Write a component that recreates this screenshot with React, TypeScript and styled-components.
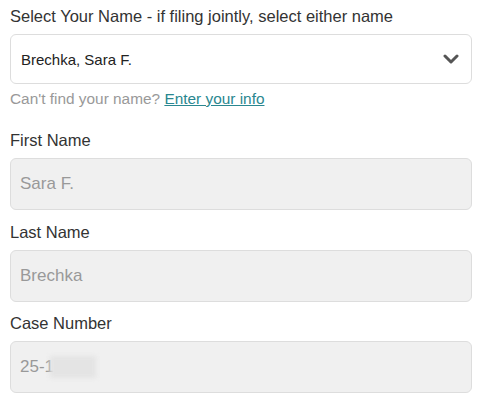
import React from "react";
import styled, { createGlobalStyle } from "styled-components";

const GlobalStyle = createGlobalStyle`
  body {
    margin: 0;
    background: #fff;
    font-family: "Liberation Sans", Arial, sans-serif;
    color: #333;
  }
`;

const Form = styled.div`
  width: 462px;
  padding: 6px 10px 0;
`;

const Group = styled.div<{ $gap?: number }>`
  margin-bottom: ${(p) => p.$gap ?? 12}px;
`;

const Label = styled.div`
  font-size: 16.5px;
  line-height: 20px;
  color: #333;
  margin-bottom: 8px;
`;

const SelectBox = styled.div`
  box-sizing: border-box;
  height: 50px;
  border: 1px solid #ddd;
  border-radius: 6px;
  background: #fff;
  display: flex;
  align-items: center;
  justify-content: space-between;
  padding: 0 12px 0 10px;
  font-size: 15px;
  color: #222;
`;

const Helper = styled.div`
  margin-top: 6px;
  font-size: 15.4px;
  line-height: 18px;
  color: #999;
`;

const Link = styled.a`
  color: #2a8790;
  text-decoration: underline;
  cursor: pointer;
`;

const Field = styled.div`
  box-sizing: border-box;
  height: 52px;
  border: 1px solid #ddd;
  border-radius: 6px;
  background: #f0f0f0;
  display: flex;
  align-items: center;
  padding: 0 9px;
  font-size: 17px;
  color: #999;
`;

const Redacted = styled.span`
  display: inline-block;
  width: 46px;
  height: 22px;
  margin-left: -4px;
  background: #e4e4e4;
  filter: blur(2px);
`;

const Chevron = () => (
  <svg width="16" height="11" viewBox="0 0 16 11">
    <polyline
      points="2,2 8,8 14,2"
      fill="none"
      stroke="#555"
      strokeWidth="3"
      strokeLinecap="round"
      strokeLinejoin="round"
    />
  </svg>
);

export default function App() {
  return (
    <>
      <GlobalStyle />
      <Form>
        <Group $gap={22}>
          <Label>Select Your Name - if filing jointly, select either name</Label>
          <SelectBox>
            <span>Brechka, Sara F.</span>
            <Chevron />
          </SelectBox>
          <Helper>
            Can't find your name? <Link>Enter your info</Link>
          </Helper>
        </Group>
        <Group>
          <Label>First Name</Label>
          <Field>Sara F.</Field>
        </Group>
        <Group $gap={11}>
          <Label>Last Name</Label>
          <Field>Brechka</Field>
        </Group>
        <Group $gap={0}>
          <Label>Case Number</Label>
          <Field>
            25-1<Redacted />
          </Field>
        </Group>
      </Form>
    </>
  );
}
